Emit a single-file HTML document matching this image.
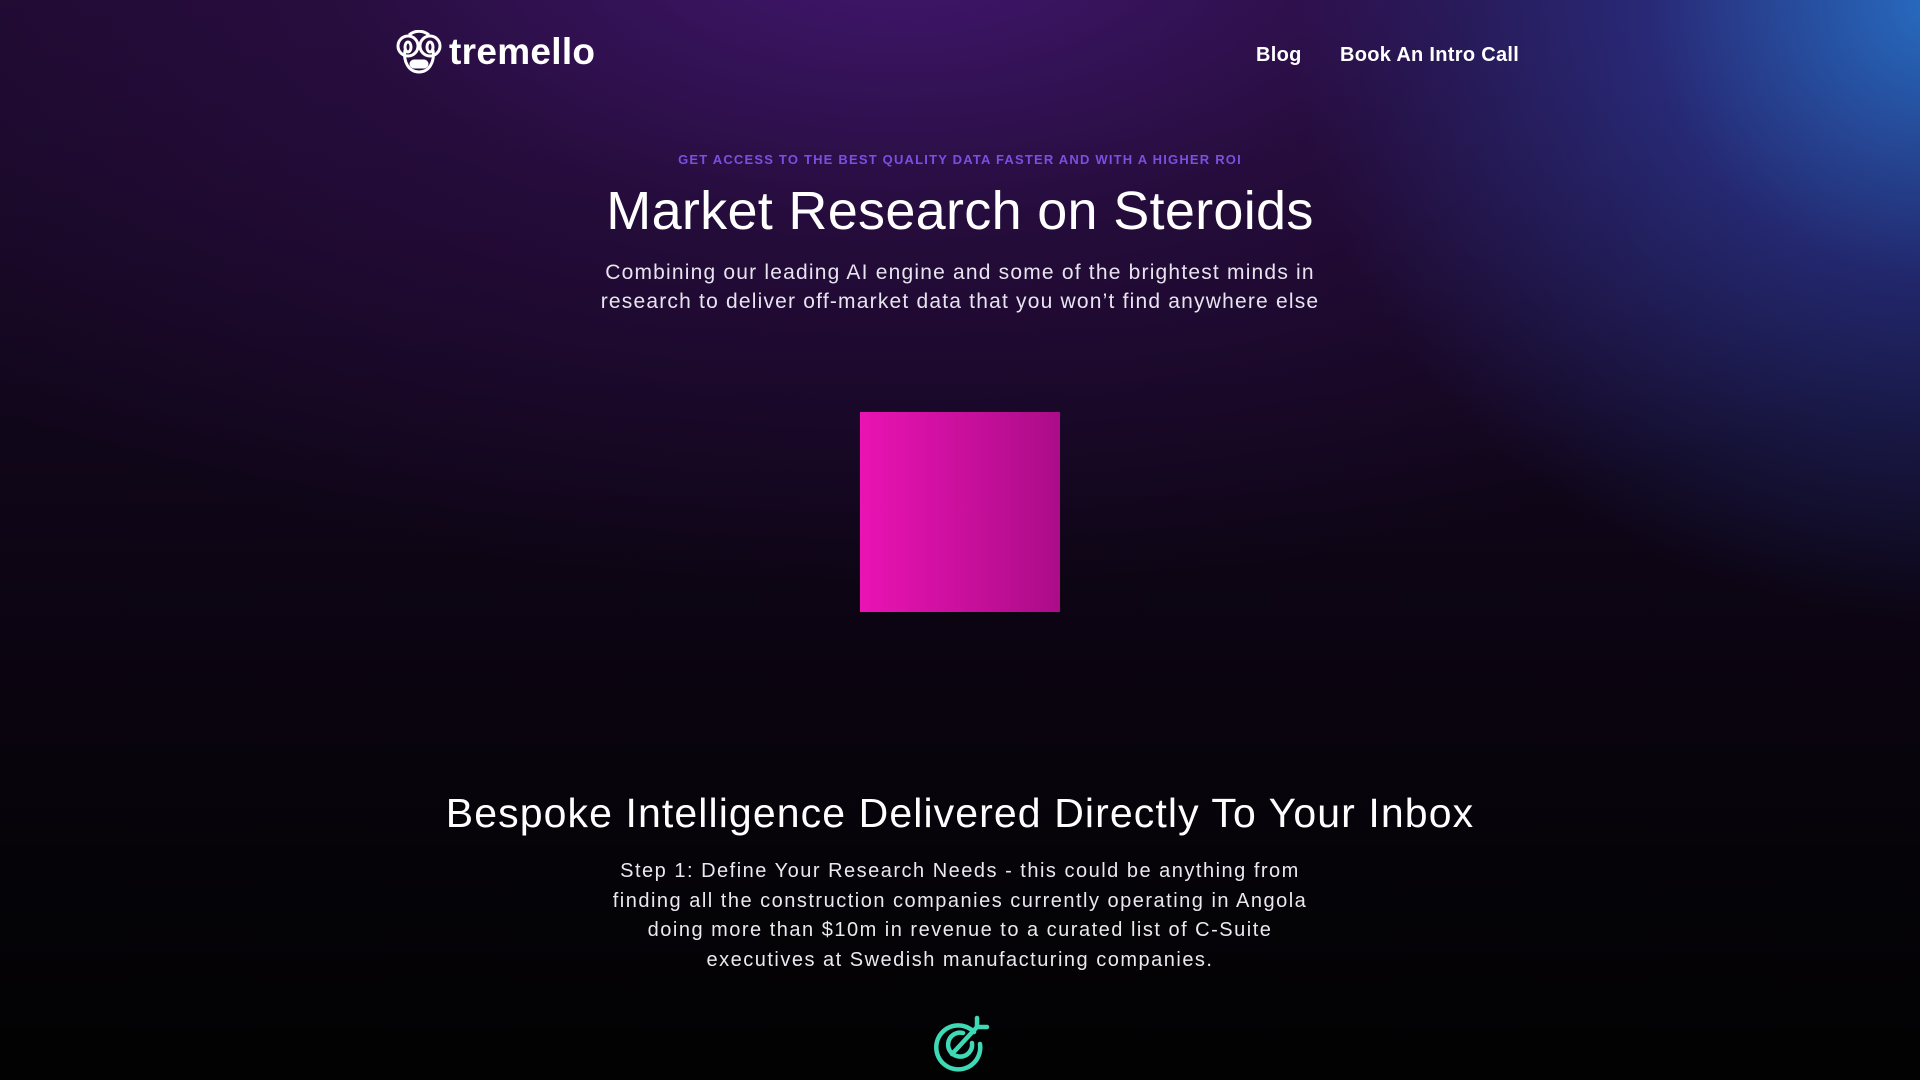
<!DOCTYPE html>
<html><head><meta charset="utf-8"><style>
*{margin:0;padding:0;box-sizing:border-box}
html,body{width:1920px;height:1080px;overflow:hidden}
body{font-family:"Liberation Sans",sans-serif;color:#fff;position:relative;
background:#07040b;}
.bg{position:absolute;inset:0;
background:
radial-gradient(ellipse 650px 620px at 1940px 0px, rgba(40,120,210,0.9), rgba(45,70,180,0.5) 45%, rgba(40,30,120,0) 100%),
radial-gradient(ellipse 1300px 650px at 900px -60px, rgba(70,25,120,0.9), rgba(50,15,80,0.55) 45%, rgba(20,5,30,0) 100%),
linear-gradient(180deg,#1a0a28 0px,#11061b 400px,#0a040f 700px,#050308 860px,#020202 1080px);}
.abs{position:absolute}
.logo{left:395px;top:30px;display:flex;align-items:center;gap:6px}
.logo span{font-size:37px;font-weight:700;letter-spacing:0.3px}
.nav{top:44px;font-size:20px;font-weight:700;letter-spacing:0.3px}
.c{left:0;width:1920px;text-align:center}
</style></head><body>
<div class="bg"></div>
<div class="abs logo">
<svg width="48" height="44" viewBox="0 0 48 44" fill="none" stroke="#fff" stroke-width="3">
<path d="M10 20 C8 32 14 42 24 42 C34 42 40 32 38 20"/>
<circle cx="13" cy="16" r="10"/><circle cx="35" cy="16" r="10"/>
<ellipse cx="13" cy="17" rx="3" ry="5"/><ellipse cx="35" cy="17" rx="3" ry="5"/>
<path d="M14 5 C20 0 28 0 34 5"/>
<rect x="16" y="31" width="16" height="6" rx="3" fill="#fff"/>
</svg>
<span>tremello</span></div>
<div class="abs nav" style="left:1256px">Blog</div>
<div class="abs nav" style="left:1340px">Book An Intro Call</div>
<div class="abs c" style="top:152px;font-size:13px;font-weight:700;letter-spacing:1.2px;color:#7b4fe0">GET ACCESS TO THE BEST QUALITY DATA FASTER AND WITH A HIGHER ROI</div>
<div class="abs c" style="top:180px;font-size:54px;line-height:62px;letter-spacing:0.3px">Market Research on Steroids</div>
<div class="abs c" style="top:258px;font-size:21px;line-height:29px;color:#e8e4ef;letter-spacing:1.2px">Combining our leading AI engine and some of the brightest minds in<br>research to deliver off-market data that you won’t find anywhere else</div>
<div class="abs" style="left:860px;top:412px;width:200px;height:200px;background:linear-gradient(90deg,#ea13b3,#ab0c88)"></div>
<div class="abs c" style="top:788px;font-size:41px;line-height:50px;letter-spacing:1.1px">Bespoke Intelligence Delivered Directly To Your Inbox</div>
<div class="abs c" style="top:857px;font-size:20px;line-height:29.5px;color:#ece8f0;letter-spacing:1.5px">Step 1: Define Your Research Needs - this could be anything from<br>finding all the construction companies currently operating in Angola<br>doing more than $10m in revenue to a curated list of C-Suite<br>executives at Swedish manufacturing companies.</div>
<svg class="abs" style="left:930px;top:1010px" width="64" height="64" viewBox="0 0 64 64" fill="none" stroke="#3fd9b5" stroke-width="4.5" stroke-linecap="round">
<path d="M44 22 A22 22 0 1 0 50 34"/>
<path d="M33 23 A12 12 0 1 0 42 33"/>
<path d="M22 44 L47 17"/>
<path d="M47 8 L47 17 L57 17"/>
</svg>
</body></html>
